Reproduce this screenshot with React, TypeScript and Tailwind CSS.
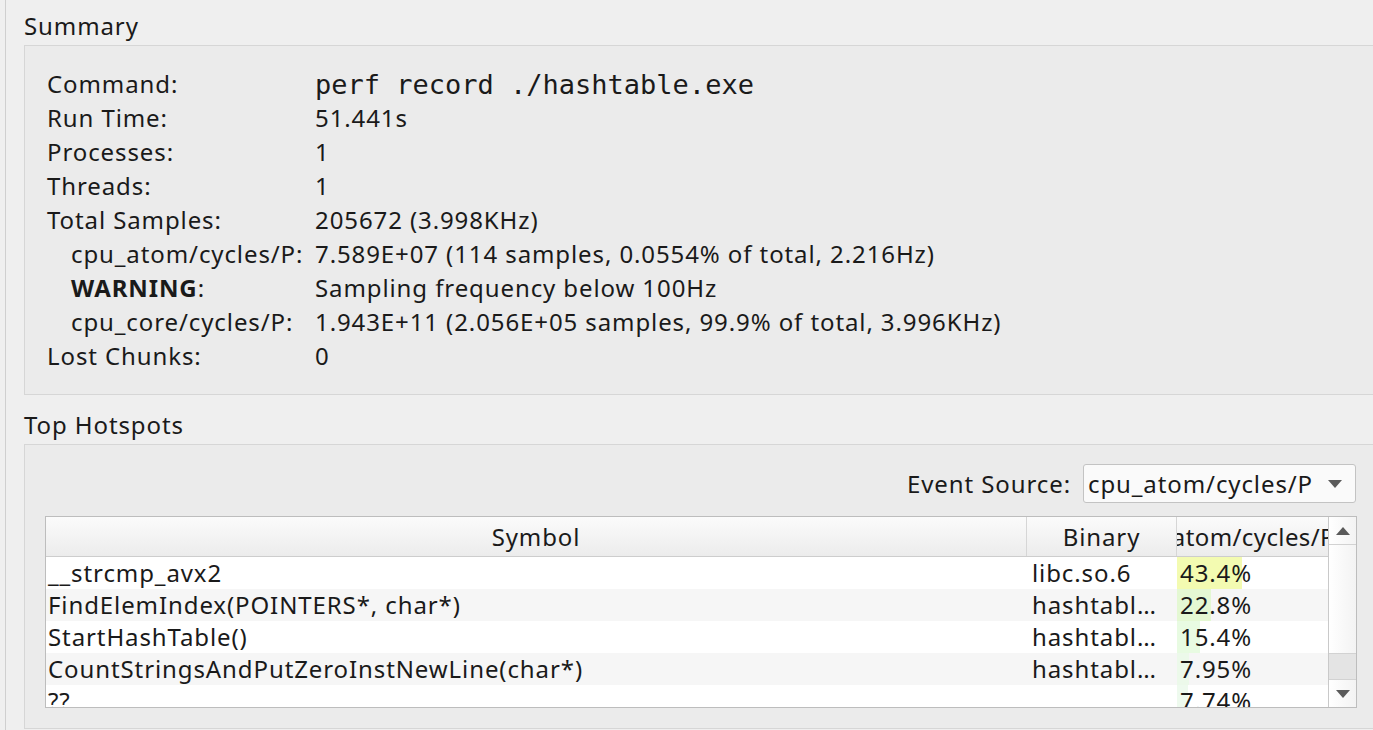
import React from 'react';

const summary: { label: string; value: string; indent?: boolean; bold?: boolean; mono?: boolean }[] = [
  { label: 'Command:', value: 'perf record ./hashtable.exe', mono: true },
  { label: 'Run Time:', value: '51.441s' },
  { label: 'Processes:', value: '1' },
  { label: 'Threads:', value: '1' },
  { label: 'Total Samples:', value: '205672 (3.998KHz)' },
  { label: 'cpu_atom/cycles/P:', value: '7.589E+07 (114 samples, 0.0554% of total, 2.216Hz)', indent: true },
  { label: 'WARNING', value: 'Sampling frequency below 100Hz', indent: true, bold: true },
  { label: 'cpu_core/cycles/P:', value: '1.943E+11 (2.056E+05 samples, 99.9% of total, 3.996KHz)', indent: true },
  { label: 'Lost Chunks:', value: '0' },
];

const hotspots = [
  { symbol: '__strcmp_avx2', binary: 'libc.so.6', pct: '43.4%', w: 65, color: '#f3fbb1' },
  { symbol: 'FindElemIndex(POINTERS*, char*)', binary: 'hashtabl…', pct: '22.8%', w: 34, color: '#e4f8d3' },
  { symbol: 'StartHashTable()', binary: 'hashtabl…', pct: '15.4%', w: 23, color: '#e8fbe2' },
  { symbol: 'CountStringsAndPutZeroInstNewLine(char*)', binary: 'hashtabl…', pct: '7.95%', w: 12, color: '#ecf9ea' },
  { symbol: '??', binary: '', pct: '7.74%', w: 11, color: '#eefaee' },
];

export default function App() {
  return (
    <div
      className="w-[1373px] h-[730px] overflow-hidden bg-[#efefef] text-[#1a1a1a] flex tracking-[0.9px]"
      style={{ fontFamily: '"Noto Sans", "Open Sans", sans-serif' }}
    >
      {/* left splitter edge */}
      <div className="w-[5px] shrink-0" />
      <div className="w-px shrink-0 bg-[#cfcfcf]" />

      <div className="flex-1 min-w-0 flex flex-col pl-[18px]">
        {/* SUMMARY */}
        <div className="h-[45px] flex items-center text-[24px] leading-none pt-[7px]">Summary</div>
        <div className="h-[350px] mr-[-4px] border border-[#d6d6d6] bg-[#ebebeb] pl-[22px] pt-[21px]">
          {summary.map((row) => (
            <div key={row.label} className="flex h-[34px] items-center text-[24px] leading-none">
              <div className={`w-[268px] shrink-0 whitespace-nowrap ${row.indent ? 'pl-[24px]' : ''}`}>
                {row.bold ? (
                  <>
                    <span className="font-bold">{row.label}</span>:
                  </>
                ) : (
                  row.label
                )}
              </div>
              {row.mono ? (
                <div className="text-[27px] pt-[1px] tracking-normal" style={{ fontFamily: '"DejaVu Sans Mono", monospace' }}>
                  {row.value}
                </div>
              ) : (
                <div className="whitespace-nowrap">{row.value}</div>
              )}
            </div>
          ))}
        </div>

        {/* TOP HOTSPOTS */}
        <div className="h-[49px] flex items-center text-[24px] leading-none pt-[11px]">Top Hotspots</div>
        <div className="h-[285px] mr-[-4px] border border-[#d6d6d6] bg-[#ebebeb] pl-[20px] pr-[20px] pt-[19px]">
          <div className="flex items-center justify-end gap-[12px] h-[39px]">
            <span className="text-[24px] leading-none">Event Source:</span>
            <div className="w-[273px] h-[39px] rounded-[3px] border border-[#c3c3c3] bg-[#fafafa] flex items-center pl-[4px] pr-[13px]">
              <span className="flex-1 text-[24px] leading-none whitespace-nowrap">cpu_atom/cycles/P</span>
              <svg width="14" height="8" viewBox="0 0 14 8">
                <polygon points="0,0 14,0 7,8" fill="#5a5a5a" />
              </svg>
            </div>
          </div>

          {/* table */}
          <div className="mt-[13px] w-[1312px] h-[192px] border border-[#bdbdbd] bg-white flex overflow-hidden">
            <div className="flex-1 min-w-0 flex flex-col">
              <div className="h-[40px] shrink-0 flex border-b border-[#cdcdcd] bg-gradient-to-b from-[#fbfbfb] to-[#ececec] text-[24px] leading-none">
                <div className="w-[981px] shrink-0 flex items-center justify-center border-r border-[#d6d6d6]">Symbol</div>
                <div className="w-[150px] shrink-0 flex items-center justify-center border-r border-[#d6d6d6]">Binary</div>
                <div className="flex-1 min-w-0 flex items-center justify-end overflow-hidden whitespace-nowrap">
                  <span className="mr-[-7px] tracking-[0.4px]">cpu_atom/cycles/P</span>
                </div>
              </div>
              {hotspots.map((h, i) => (
                <div
                  key={h.symbol}
                  className={`h-[32px] shrink-0 flex text-[24px] leading-none ${i % 2 === 1 ? 'bg-[#f6f6f6]' : 'bg-white'}`}
                >
                  <div className="w-[981px] shrink-0 flex items-center pl-[2px] whitespace-nowrap">{h.symbol}</div>
                  <div className="w-[150px] shrink-0 flex items-center pl-[5px] whitespace-nowrap">{h.binary}</div>
                  <div className="flex-1 min-w-0 relative flex items-center pl-[3px]">
                    <div className="absolute left-0 top-0 bottom-0" style={{ width: h.w, background: h.color }} />
                    <span className="relative whitespace-nowrap">{h.pct}</span>
                  </div>
                </div>
              ))}
            </div>

            {/* scrollbar */}
            <div className="w-[28px] shrink-0 border-l border-[#c9c9c9] flex flex-col bg-gradient-to-r from-white to-[#f3f3f3]">
              <div className="h-[28px] flex items-center justify-center border-b border-[#d2d2d2]">
                <svg width="14" height="8" viewBox="0 0 14 8">
                  <polygon points="0,8 14,8 7,0" fill="#5a5a5a" />
                </svg>
              </div>
              <div className="flex-1" />
              <div className="h-[27px] bg-[#e4e4e4] border-y border-[#d2d2d2]" />
              <div className="h-[27px] flex items-center justify-center">
                <svg width="14" height="8" viewBox="0 0 14 8">
                  <polygon points="0,0 14,0 7,8" fill="#5a5a5a" />
                </svg>
              </div>
            </div>
          </div>
        </div>
      </div>
    </div>
  );
}
